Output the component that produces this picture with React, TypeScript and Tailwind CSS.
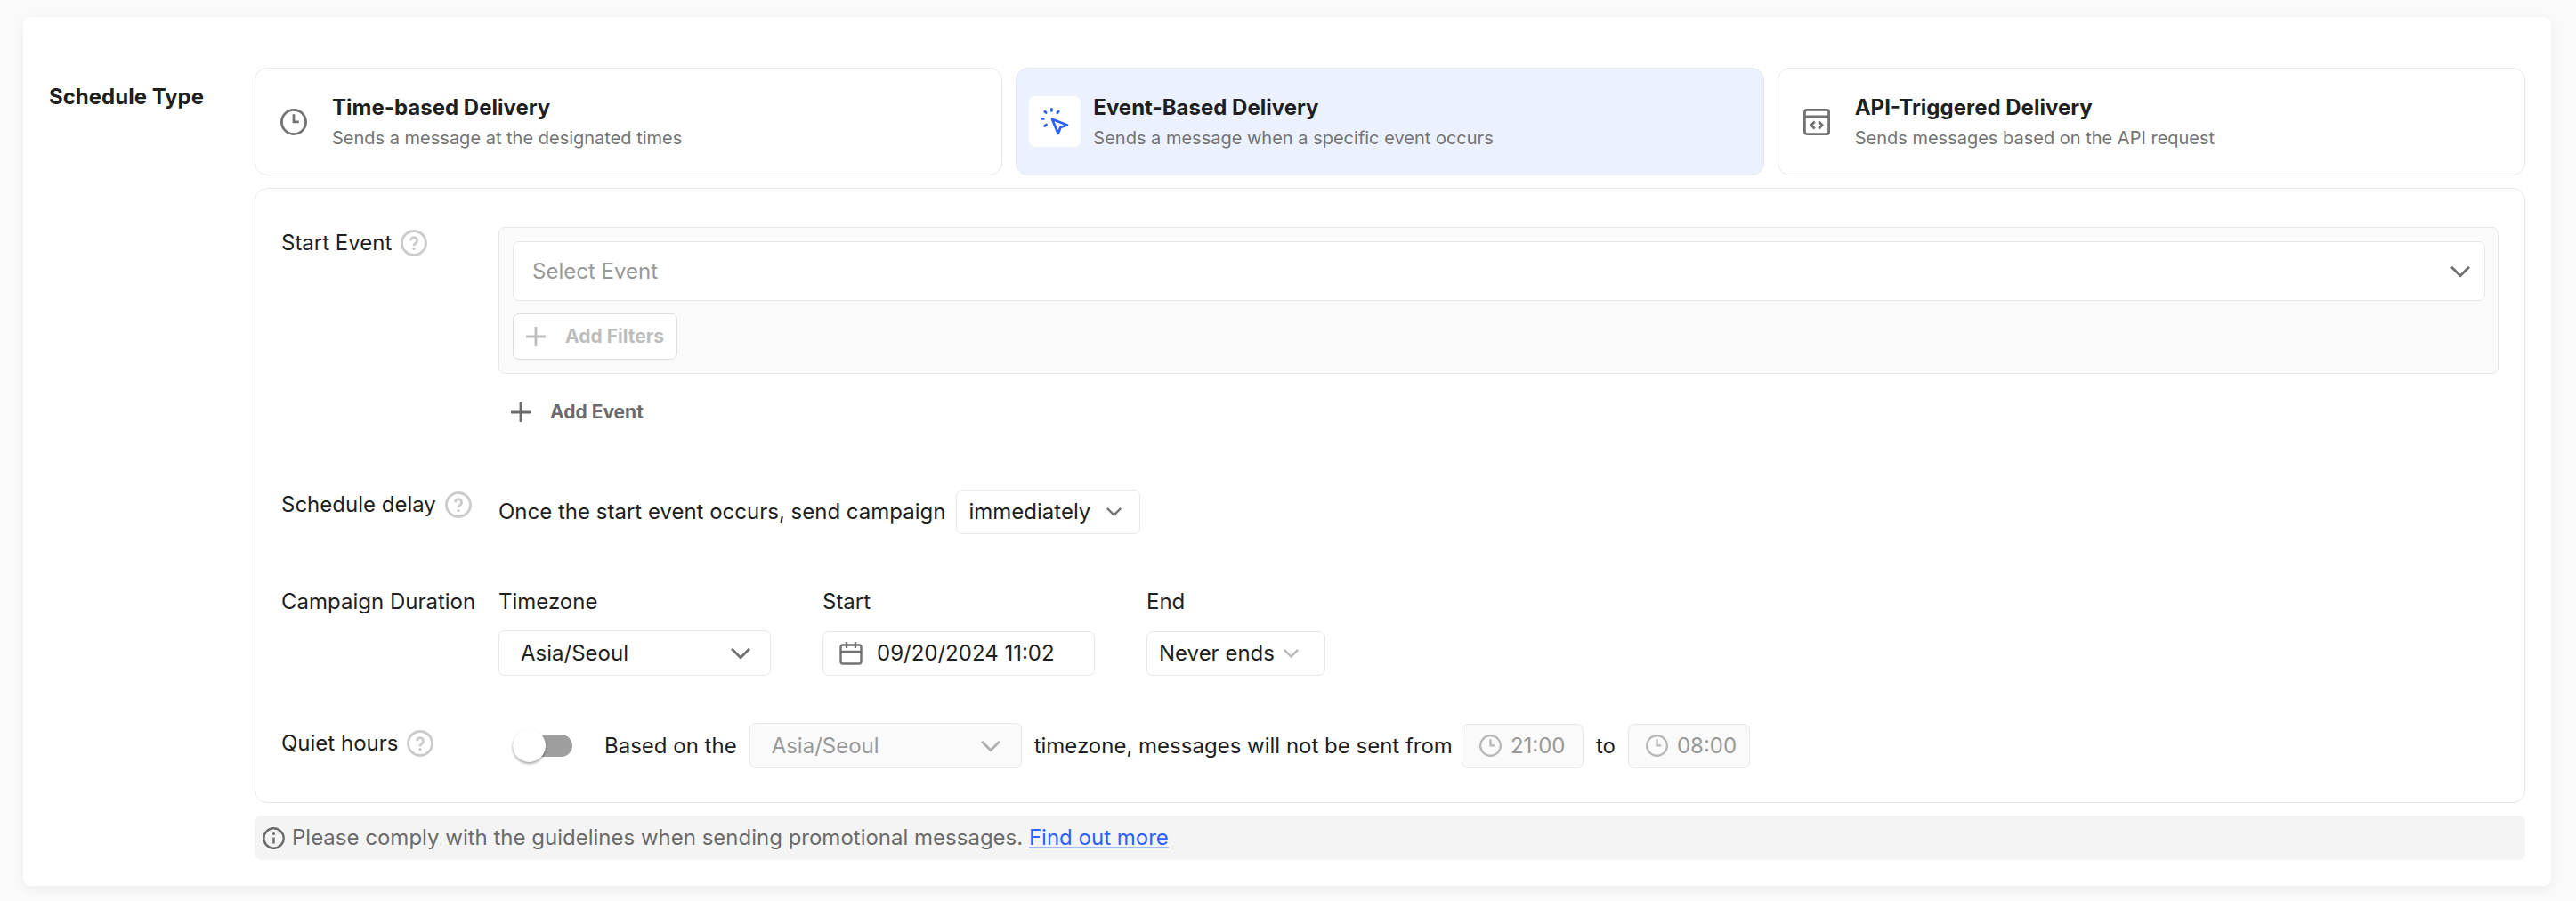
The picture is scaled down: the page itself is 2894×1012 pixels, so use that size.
import { useState, type ReactNode } from "react";

type IconProps = { className?: string };

function ClockIcon({ className = "" }: IconProps) {
  return (
    <svg viewBox="0 0 30 30" fill="none" stroke="currentColor" strokeWidth="2.8" className={className} aria-hidden="true">
      <circle cx="15" cy="15" r="13.6" />
      <path d="M15 6.2v8.600h5.800" />
    </svg>
  );
}

function HelpIcon() {
  return (
    <svg viewBox="0 0 30 30" fill="none" stroke="currentColor" strokeWidth="2.8" className="size-[30px] shrink-0 text-[#cbcbcb]" aria-hidden="true">
      <circle cx="15" cy="15" r="13.5" />
      <path d="M11.400 12.200a3.600 3.600 0 1 1 5.600 3c-1.300.9-2 1.500-2 3" />
      <circle cx="15" cy="21.600" r="1.700" fill="currentColor" stroke="none" />
    </svg>
  );
}

function PointerIcon() {
  return (
    <svg viewBox="0 0 32 32" fill="none" stroke="currentColor" strokeWidth="2.800" strokeLinecap="round" className="size-8 text-[#2962ff]" aria-hidden="true">
      <path d="M12.400 1.400v2M4.800 4.200l1.400 1.400M20.200 4.200l-1.400 1.600M1.400 12.300h2M6.500 19.100l-2 1.400" />
      <path d="M13 12.800l17 6.700-7.500 2.500-2.800 6.800z" strokeLinejoin="round" />
    </svg>
  );
}

function ApiIcon() {
  return (
    <svg viewBox="0 0 30 30" fill="none" stroke="currentColor" strokeWidth="2.800" className="size-[30px] text-[#737373]" aria-hidden="true">
      <rect x="1.400" y="1.400" width="27.200" height="27.200" rx="2.500" />
      <path d="M1.400 9h27.200M12.700 14.600l-3.800 3.900 3.800 3.900M17.300 14.600l3.800 3.900-3.800 3.900" />
    </svg>
  );
}

function PlusIcon() {
  return (
    <svg viewBox="0 0 22 22" stroke="currentColor" strokeWidth="2.800" className="size-[22px]" aria-hidden="true">
      <path d="M11 0v22M0 11h22" />
    </svg>
  );
}

function CalendarIcon() {
  return (
    <svg viewBox="0 0 26 26" fill="none" stroke="currentColor" strokeWidth="2.400" className="size-[26px] text-[#737373]" aria-hidden="true">
      <rect x="1.500" y="3.500" width="23" height="21" rx="2.500" />
      <path d="M1.500 11h23M8 0v7M18 0v7" />
    </svg>
  );
}

function InfoIcon() {
  return (
    <svg viewBox="0 0 25 25" fill="none" stroke="currentColor" strokeWidth="2.400" className="size-[25px] shrink-0" aria-hidden="true">
      <circle cx="12.500" cy="12.500" r="11.200" />
      <path d="M12.500 11.500v7" />
      <circle cx="12.500" cy="7.600" r="1.500" fill="currentColor" stroke="none" />
    </svg>
  );
}

function Chevron({ className = "" }: IconProps) {
  return (
    <svg viewBox="0 0 22 13" fill="none" stroke="currentColor" strokeWidth="3" className={"pointer-events-none absolute top-1/2 -translate-y-1/2 " + className} aria-hidden="true">
      <path d="M1 1.200l10 10 10-10" />
    </svg>
  );
}

type SelectProps = {
  label: string;
  options: string[];
  className?: string;
  fieldClass: string;
  chevronClass: string;
  disabled?: boolean;
  id?: string;
};

function Select({ label, options, className = "", fieldClass, chevronClass, disabled, id }: SelectProps) {
  return (
    <div className={"relative " + className}>
      <select
        id={id}
        aria-label={label}
        disabled={disabled}
        className={"block w-full appearance-none rounded-[7px] border border-[#e8e8e8] opacity-100 outline-none focus:border-[#2962ff] " + fieldClass}
      >
        {options.map((o) => (
          <option key={o}>{o}</option>
        ))}
      </select>
      <Chevron className={chevronClass} />
    </div>
  );
}

function TypeCard({ title, text, icon, active, onClick }: { title: string; text: string; icon: ReactNode; active: boolean; onClick: () => void }) {
  return (
    <button
      type="button"
      aria-pressed={active}
      onClick={onClick}
      className={"flex h-[121px] min-w-0 flex-1 items-center gap-[14px] rounded-[14px] border border-[#e8e8e8] px-[14px] text-left " + (active ? "bg-[#ebf1ff]" : "bg-white")}
    >
      <span className="grid h-[57px] w-[58px] shrink-0 place-items-center rounded-[7px] bg-white text-[#737373]">{icon}</span>
      <span className="block">
        <span className="block text-[24px] leading-9 font-bold">{title}</span>
        <span className="block text-[20px] leading-8 text-[#737373]">{text}</span>
      </span>
    </button>
  );
}

function Row({ label, help, className = "", labelClass = "", children }: { label: string; help?: boolean; className?: string; labelClass?: string; children: ReactNode }) {
  return (
    <div className={"flex items-start " + className}>
      <div className={"flex w-[244px] shrink-0 items-center gap-[10px] leading-9 whitespace-nowrap " + labelClass}>
        {label}
        {help && (
          <button type="button" aria-label={"About " + label}>
            <HelpIcon />
          </button>
        )}
      </div>
      <div className="min-w-0 flex-1">{children}</div>
    </div>
  );
}

function TimeField({ label, value }: { label: string; value: string }) {
  return (
    <div className="flex h-[50px] w-[137px] items-center gap-[10px] rounded-[7px] border border-[#e8e8e8] bg-[#fafafa] pl-[19px] text-[#999999]">
      <ClockIcon className="size-[25px] shrink-0 text-[#b8b8b8]" />
      <input aria-label={label} defaultValue={value} disabled className="w-[70px] bg-transparent" />
    </div>
  );
}

const types = [
  { title: "Time-based Delivery", text: "Sends a message at the designated times", icon: <ClockIcon className="size-[30px]" /> },
  { title: "Event-Based Delivery", text: "Sends a message when a specific event occurs", icon: <PointerIcon /> },
  { title: "API-Triggered Delivery", text: "Sends messages based on the API request", icon: <ApiIcon /> },
];

export default function App() {
  const [type, setType] = useState(1);
  const [quiet, setQuiet] = useState(false);

  return (
    <div className="min-h-screen bg-[#fafafa] pt-[19px] pr-7 pb-[17px] pl-[26px] font-['Inter',sans-serif] text-[24px] text-[#1f1f1f]">
      <main className="flex rounded-[8px] bg-white pt-[57px] pr-[29px] pb-[29px] pl-[29px] shadow-[0_4px_14px_rgba(0,0,0,0.06)]">
        <h1 className="w-[231px] shrink-0 pt-[15px] leading-9 font-bold">Schedule Type</h1>
        <div className="min-w-0 flex-1">
          <div className="flex gap-[15px]">
            {types.map((t, i) => (
              <TypeCard key={t.title} {...t} active={type === i} onClick={() => setType(i)} />
            ))}
          </div>

          <section className="mt-[14px] rounded-[14px] border border-[#e8e8e8] px-[29px] pt-[43px] pb-[38px]">
            <Row label="Start Event" help labelClass="h-9">
              <div className="rounded-[7px] border border-[#e8e8e8] bg-[#fafafa] py-[15px] pr-[14px] pl-[15px]">
                <Select label="Start event" options={["Select Event"]} fieldClass="h-[67px] bg-white px-[21px] text-[#999999]" chevronClass="right-[17px] w-[22px] text-[#737373]" />
                <button type="button" disabled className="mt-[14px] flex h-[52px] items-center gap-[22px] rounded-[7px] border border-[#dedede] bg-white px-[14px] text-[21px] font-bold text-[#bdbdbd]">
                  <PlusIcon />
                  Add Filters
                </button>
              </div>
              <button type="button" className="mt-[18px] ml-[14px] flex h-[50px] items-center gap-[22px] text-[21px] font-bold text-[#6b6b6b]">
                <PlusIcon />
                Add Event
              </button>
            </Row>

            <Row label="Schedule delay" help className="mt-[62px]" labelClass="h-[34px]">
              <div className="flex items-center gap-3">
                <label htmlFor="delay">Once the start event occurs, send campaign</label>
                <Select id="delay" label="Schedule delay" options={["immediately"]} className="w-[207px]" fieldClass="h-[50px] bg-white px-[13px]" chevronClass="right-[21px] w-[17px] text-[#737373]" />
              </div>
            </Row>

            <Row label="Campaign Duration" className="mt-[58px]">
              <div className="flex gap-[58px]">
                <div className="w-[306px]">
                  <label htmlFor="timezone" className="block leading-9">Timezone</label>
                  <Select id="timezone" label="Timezone" options={["Asia/Seoul"]} className="mt-[14px]" fieldClass="h-[51px] bg-white px-[24px]" chevronClass="right-[23px] w-[22px] text-[#737373]" />
                </div>
                <div className="w-[306px]">
                  <label htmlFor="start" className="block leading-9">Start</label>
                  <div className="mt-[15px] flex h-[50px] items-center gap-4 rounded-[7px] border border-[#e8e8e8] pl-[18px]">
                    <CalendarIcon />
                    <input id="start" defaultValue="09/20/2024 11:02" className="w-[220px] outline-none" />
                  </div>
                </div>
                <div className="w-[201px]">
                  <label htmlFor="end" className="block leading-9">End</label>
                  <Select id="end" label="End" options={["Never ends"]} className="mt-[15px]" fieldClass="h-[50px] bg-white px-[13px]" chevronClass="right-[30px] w-[17px] text-[#b8b8b8]" />
                </div>
              </div>
            </Row>

            <Row label="Quiet hours" help className="mt-[53px]" labelClass="mt-[5px]">
              <div className="flex items-center whitespace-nowrap">
                <label className="relative mr-9 ml-4 block h-[37px] w-[67px] cursor-pointer">
                  <input type="checkbox" role="switch" aria-label="Quiet hours" checked={quiet} onChange={() => setQuiet(!quiet)} className="peer sr-only" />
                  <span className="absolute inset-x-0 top-[6px] h-[25px] rounded-full bg-[#9e9e9e] peer-checked:bg-[#2962ff]" />
                  <span className="absolute top-0 left-0 size-[37px] rounded-full bg-white shadow-[0_2px_3px_rgba(0,0,0,0.35)] peer-checked:left-[30px]" />
                </label>
                <span>Based on the</span>
                <Select label="Quiet hours timezone" options={["Asia/Seoul"]} disabled className="ml-[14px] w-[306px]" fieldClass="h-[51px] bg-[#fafafa] px-[24px] text-[#999999]" chevronClass="right-[24px] w-[22px] text-[#b0b0b0]" />
                <span className="mr-[10px] ml-[14px]">timezone, messages will not be sent from</span>
                <TimeField label="Quiet hours start" value="21:00" />
                <span className="mx-[14px]">to</span>
                <TimeField label="Quiet hours end" value="08:00" />
              </div>
            </Row>
          </section>

          <p className="mt-[14px] flex h-[50px] items-center gap-2 rounded-[7px] bg-[#f4f4f4] px-[9px] text-[#6b6b6b]">
            <InfoIcon />
            <span>
              Please comply with the guidelines when sending promotional messages.{" "}
              <a href="#guidelines" className="text-[#2962ff] underline decoration-[#a3b9ff] decoration-2 underline-offset-2">Find out more</a>
            </span>
          </p>
        </div>
      </main>
    </div>
  );
}
